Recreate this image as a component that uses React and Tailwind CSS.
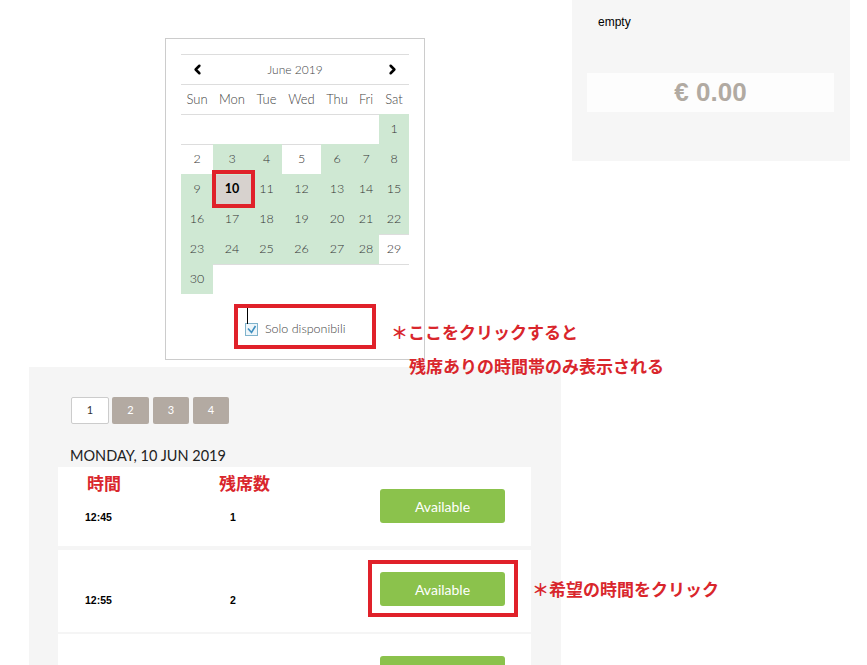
import React from "react";
import { ChevronLeft, ChevronRight } from "lucide-react";

const G = "g", W = "w", S = "s", E = "e";
const weeks = [
  [[E, ""], [E, ""], [E, ""], [E, ""], [E, ""], [E, ""], [G, "1"]],
  [[W, "2"], [G, "3"], [G, "4"], [W, "5"], [G, "6"], [G, "7"], [G, "8"]],
  [[G, "9"], [S, "10"], [G, "11"], [G, "12"], [G, "13"], [G, "14"], [G, "15"]],
  [[G, "16"], [G, "17"], [G, "18"], [G, "19"], [G, "20"], [G, "21"], [G, "22"]],
  [[G, "23"], [G, "24"], [G, "25"], [G, "26"], [G, "27"], [G, "28"], [W, "29"]],
  [[G, "30"], [E, ""], [E, ""], [E, ""], [E, ""], [E, ""], [E, ""]],
];
const days = ["Sun", "Mon", "Tue", "Wed", "Thu", "Fri", "Sat"];
const cols = "grid grid-cols-[32px_38px_31px_39px_32px_26px_30px]";

function cellClass(t) {
  if (t === G) return "bg-[#cfe8d3] border-[#cfe8d3]";
  if (t === S) return "bg-[#d7d2ce] border-[#cfe8d3] font-bold text-black";
  return "bg-white border-[#dddddd]";
}

function Calendar() {
  return (
    <div className="ml-[165px] mt-[38px] w-[260px] h-[322px] border border-[#cccccc] bg-white pt-[15px] pl-[15px] font-['Lato',sans-serif] font-light text-[#333]">
      <div className="w-[228px]">
        <div className="h-[30px] border-t border-[#dddddd] flex items-center justify-between px-[9px]">
          <ChevronLeft size={15} strokeWidth={4} color="#000" />
          <span className="text-[12px] text-[#444]">June 2019</span>
          <ChevronRight size={15} strokeWidth={4} color="#000" />
        </div>
        <div className={cols + " h-[30px] border-t border-[#dddddd] text-[13px] text-[#444]"}>
          {days.map((d) => (
            <div key={d} className="flex items-center justify-center">{d}</div>
          ))}
        </div>
        {weeks.map((w, i) => (
          <div key={i} className={cols}>
            {w.map(([t, n], j) => (
              <div key={j} className={"h-[30px] border-t flex items-center justify-center text-[12.5px] " + cellClass(t)}>
                {n}
              </div>
            ))}
          </div>
        ))}
      </div>
      <div className="mt-[26px] ml-[64px] flex items-center gap-[7px] relative">
        <span className="absolute left-[2px] -top-[12px] w-px h-[16px] bg-black" />
        <svg width="13" height="13" viewBox="0 0 13 13">
          <rect x="0.5" y="0.5" width="12" height="12" fill="#eef6fa" stroke="#7fb3cc" />
          <path d="M3 5.5 L6.5 9.5 L10.5 3" fill="none" stroke="#3f8fbf" strokeWidth="1.6" />
        </svg>
        <span className="text-[12.5px] text-[#444]">Solo disponibili</span>
      </div>
    </div>
  );
}

function RightPanel() {
  return (
    <div className="ml-[147px] w-[278px] h-[161px] bg-[#f6f6f6] pt-[15px] font-['Liberation_Sans',Arial,sans-serif]">
      <div className="pl-[26px] text-[12px] text-black leading-[14px]">empty</div>
      <div className="mt-[44px] ml-[15px] w-[247px] h-[39px] bg-[#fdfdfd] flex items-center justify-center text-[26px] font-bold text-[#b1aaa2]">
        € 0.00
      </div>
    </div>
  );
}

function Row({ time, count, h, mt, label = "Available" }) {
  return (
    <div className={"w-[473px] bg-white flex items-start pl-[27px] pr-[26px] " + h + " " + mt}>
      <div className="w-[145px] pt-[43px] text-[10.5px] font-bold text-black font-['Liberation_Sans',Arial,sans-serif]">{time}</div>
      <div className="pt-[43px] text-[10.5px] font-bold text-black font-['Liberation_Sans',Arial,sans-serif]">{count}</div>
      <button className="ml-auto mt-[22px] w-[125px] h-[34px] rounded-[3px] bg-[#8bc24c] text-white text-[14px] font-['Lato',sans-serif]">
        {label}
      </button>
    </div>
  );
}

function BottomPanel() {
  return (
    <div className="mt-[7px] ml-[29px] w-[532px] h-[298px] bg-[#f5f5f5] pt-[30px] overflow-hidden">
      <div className="pl-[42px] flex gap-[3px] font-['Lato',sans-serif] text-[11px]">
        <div className="w-[38px] h-[27px] bg-white border border-[#cccccc] rounded-[2px] flex items-center justify-center text-[#333]">1</div>
        <div className="w-[37px] h-[27px] bg-[#b3aaa2] rounded-[2px] flex items-center justify-center text-white">2</div>
        <div className="ml-[1px] w-[36px] h-[27px] bg-[#b3aaa2] rounded-[2px] flex items-center justify-center text-white">3</div>
        <div className="ml-[1px] w-[36px] h-[27px] bg-[#b3aaa2] rounded-[2px] flex items-center justify-center text-white">4</div>
      </div>
      <div className="mt-[22px] pl-[41px] h-[20px] leading-[20px] text-[14.5px] text-[#222] font-['Lato',sans-serif]">MONDAY, 10 JUN 2019</div>
      <div className="ml-[29px] mt-[1px]">
        <Row time="12:45" count="1" h="h-[79px]" mt="" />
        <Row time="12:55" count="2" h="h-[82px]" mt="mt-[4px]" />
        <Row time="" count="" h="h-[40px]" mt="mt-[2px]" label="" />
      </div>
    </div>
  );
}

const jp = "font-['Noto_Sans_CJK_JP',sans-serif] font-bold text-[#d9262c] text-[17px] leading-[22px] whitespace-nowrap";

export default function App() {
  return (
    <div className="relative w-[867px] h-[665px] overflow-hidden bg-white">
      <div className="flex items-start">
        <Calendar />
        <RightPanel />
      </div>
      <BottomPanel />

      <div className="absolute left-[212px] top-[170px] w-[43px] h-[38px] border-4 border-[#e0212a]" />
      <div className="absolute left-[234px] top-[304px] w-[142px] h-[45px] border-4 border-[#e0212a]" />
      <div className="absolute left-[368px] top-[560px] w-[150px] h-[57px] border-4 border-[#e0212a]" />

      <div className={"absolute left-[391px] top-[321px] " + jp}>＊ここをクリックすると</div>
      <div className={"absolute left-[409px] top-[355px] " + jp}>残席ありの時間帯のみ表示される</div>
      <div className={"absolute left-[87px] top-[472px] " + jp}>時間</div>
      <div className={"absolute left-[219px] top-[472px] " + jp}>残席数</div>
      <div className={"absolute left-[532px] top-[578px] " + jp}>＊希望の時間をクリック</div>
    </div>
  );
}
